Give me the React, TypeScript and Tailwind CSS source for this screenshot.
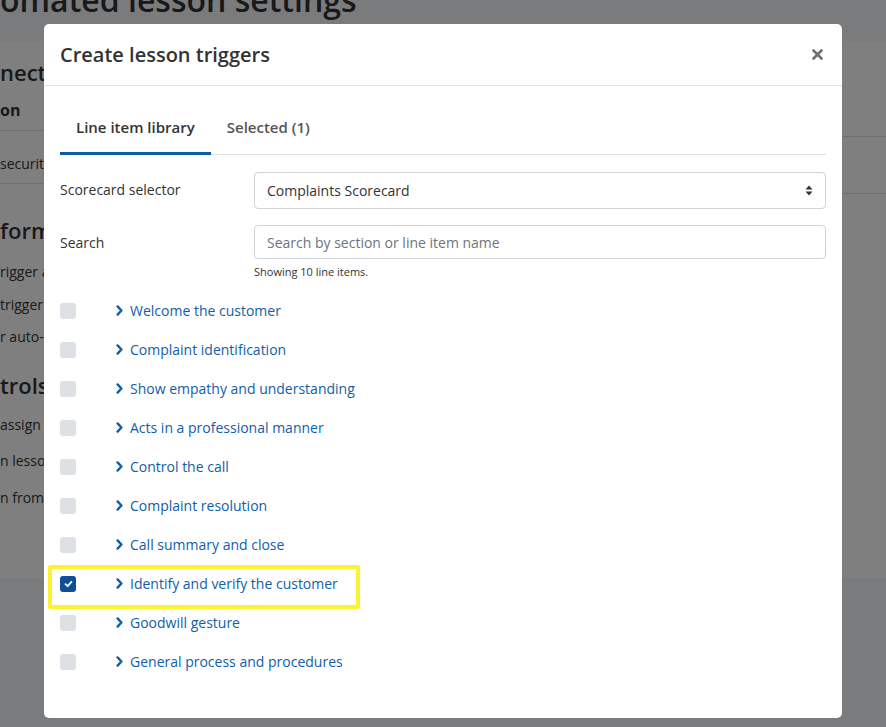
import React from "react";

const items = [
  { label: "Welcome the customer", checked: false },
  { label: "Complaint identification", checked: false },
  { label: "Show empathy and understanding", checked: false },
  { label: "Acts in a professional manner", checked: false },
  { label: "Control the call", checked: false },
  { label: "Complaint resolution", checked: false },
  { label: "Call summary and close", checked: false },
  { label: "Identify and verify the customer", checked: true },
  { label: "Goodwill gesture", checked: false },
  { label: "General process and procedures", checked: false },
];

function Chevron() {
  return (
    <svg width="7" height="11" viewBox="0 0 7 11" className="shrink-0">
      <path d="M1.6 1.4 L5.4 5.5 L1.6 9.6" fill="none" stroke="#105ea8" strokeWidth="2.4" strokeLinecap="round" strokeLinejoin="round" />
    </svg>
  );
}

function Checkbox({ checked }: { checked: boolean }) {
  if (checked) {
    return (
      <div className="flex h-4 w-4 items-center justify-center rounded-[3px] bg-[#0e4f96]">
        <svg width="9" height="8" viewBox="0 0 9 8">
          <path d="M1.5 4.2 L3.6 6.2 L7.5 1.8" fill="none" stroke="white" strokeWidth="1.8" strokeLinecap="round" strokeLinejoin="round" />
        </svg>
      </div>
    );
  }
  return <div className="h-4 w-4 rounded-[3px] bg-[#dde1e6]" />;
}

export default function App() {
  return (
    <div className="relative h-[727px] w-[886px] overflow-hidden bg-[#f5f6f8] font-['Open_Sans',sans-serif] text-[#333]">
      {/* background page */}
      <div className="flex flex-col">
        <div className="h-[41px] overflow-hidden">
          <h1 className="mt-[-19px] whitespace-nowrap text-[32px] font-semibold leading-[1.2] text-[#333]">
            omated lesson settings
          </h1>
        </div>
        <div className="flex h-[537px] bg-white">
          <div className="flex w-[60px] flex-col overflow-hidden whitespace-nowrap">
            <div className="mt-[16px] flex h-[30px] items-center text-[22px] font-semibold">nect settings</div>
            <div className="mt-[11px] flex h-[24px] items-center text-[16px] font-bold">on</div>
            <div className="mt-[8px] h-px bg-[#dedede]" />
            <div className="mt-[20px] flex h-[24px] items-center text-[14px]">security settings</div>
            <div className="mt-[8px] h-px bg-[#dedede]" />
            <div className="mt-[31px] flex h-[30px] items-center text-[22px] font-semibold">formation</div>
            <div className="mt-[14px] flex h-[24px] items-center text-[14px]">rigger a lesson</div>
            <div className="mt-[9px] flex h-[24px] items-center text-[14px]">trigger lessons</div>
            <div className="mt-[8px] flex h-[24px] items-center text-[14px]">r auto-assign</div>
            <div className="mt-[22px] flex h-[30px] items-center text-[22px] font-semibold">trols</div>
            <div className="mt-[12px] flex h-[24px] items-center text-[14px]">assign lessons</div>
            <div className="mt-[12px] flex h-[24px] items-center text-[14px]">n lessons</div>
            <div className="mt-[13px] flex h-[24px] items-center text-[14px]">n from review</div>
          </div>
          <div className="flex-1" />
          <div className="flex w-[60px] flex-col">
            <div className="mt-[95px] h-px bg-[#dedede]" />
            <div className="mt-[56px] h-px bg-[#dedede]" />
          </div>
        </div>
      </div>

      {/* overlay */}
      <div className="absolute inset-0 bg-black/50" />

      {/* modal */}
      <div className="absolute left-[44px] top-[24px] flex h-[694px] w-[798px] flex-col rounded-[5px] bg-white">
        <div className="flex h-[62px] shrink-0 items-center justify-between border-b border-[#e5e5e5] px-4">
          <h2 className="text-[20px] font-semibold leading-[30px] text-[#333]">Create lesson triggers</h2>
          <svg width="11" height="11" viewBox="0 0 11 11" className="mr-[3px]">
            <path d="M1.5 1.5 L9.5 9.5 M9.5 1.5 L1.5 9.5" stroke="#707070" strokeWidth="2.6" strokeLinecap="round" />
          </svg>
        </div>

        <div className="flex flex-col px-4 pt-4">
          {/* tabs */}
          <div className="flex border-b border-[#dee2e6]">
            <div className="-mb-px border-b-[3px] border-[#0e5ba6] px-4 pb-[14px] pt-[15px] text-[15px] font-semibold leading-[21px] text-[#333]">
              Line item library
            </div>
            <div className="-mb-px border-b-[3px] border-transparent px-4 pb-[14px] pt-[15px] text-[15px] font-semibold leading-[21px] text-[#555]">
              Selected (1)
            </div>
          </div>

          {/* form */}
          <div className="mt-[17px] grid grid-cols-[194px_1fr] items-center gap-y-4">
            <div className="mb-[2px] text-[14px] text-[#333]">Scorecard selector</div>
            <div className="flex h-[37px] items-center justify-between rounded-[4px] border border-[#ced4da] pl-3 pr-[12px] text-[14px] text-[#333]">
              <span>Complaints Scorecard</span>
              <svg width="8" height="11" viewBox="0 0 8 11">
                <path d="M4 0.5 L7.5 4.5 L0.5 4.5 Z M4 10.5 L7.5 6.5 L0.5 6.5 Z" fill="#333" />
              </svg>
            </div>
            <div className="pt-[1px] text-[14px] text-[#333]">Search</div>
            <div className="flex h-[34px] items-center rounded-[4px] border border-[#ced4da] px-3 pt-[1px] text-[14px] text-[#6c757d]">
              Search by section or line item name
            </div>
          </div>
          <div className="ml-[194px] mt-[6px] text-[11px] leading-[14px] text-[#333]">Showing 10 line items.</div>

          {/* list */}
          <div className="mt-[12px] flex flex-col">
            {items.map((it) => (
              <div key={it.label} className="flex h-[39px] items-center">
                <Checkbox checked={it.checked} />
                <div className="ml-[40px] flex items-center gap-[7px] text-[14px] text-[#105ea8]">
                  <Chevron />
                  <span>{it.label}</span>
                </div>
              </div>
            ))}
          </div>
        </div>
      </div>

      {/* highlight annotation */}
      <div className="absolute left-[48px] top-[565px] h-[44px] w-[312px] rounded-[2px] border-4 border-[#fdf22f]" />
    </div>
  );
}
